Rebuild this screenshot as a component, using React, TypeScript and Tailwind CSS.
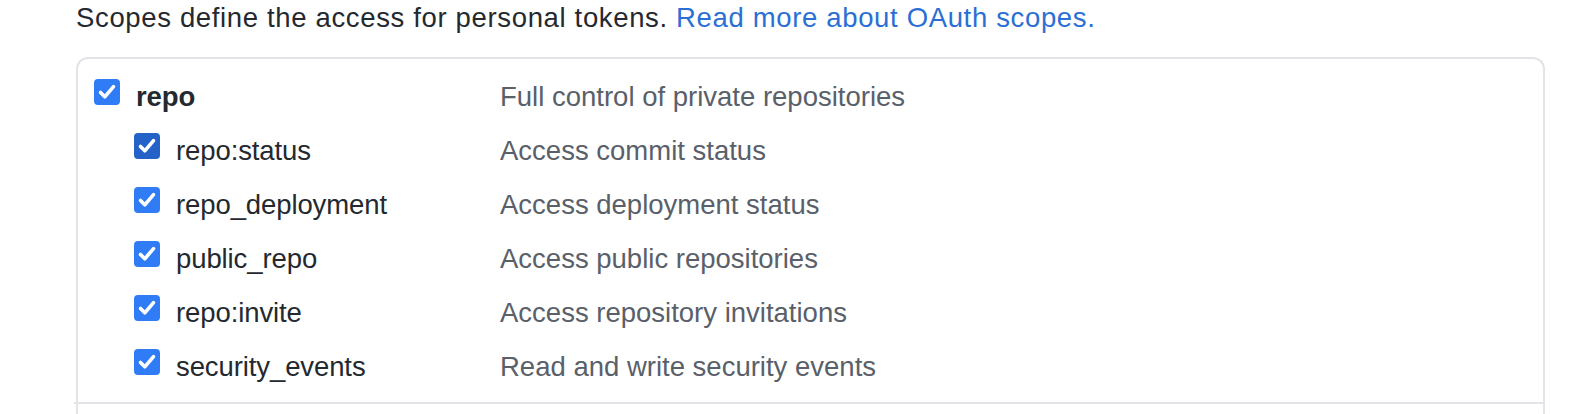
const scopes = [
  { name: "repo", desc: "Full control of private repositories", parent: true },
  { name: "repo:status", desc: "Access commit status", focused: true },
  { name: "repo_deployment", desc: "Access deployment status" },
  { name: "public_repo", desc: "Access public repositories" },
  { name: "repo:invite", desc: "Access repository invitations" },
  { name: "security_events", desc: "Read and write security events" },
];

function Check({ dark }: { dark?: boolean }) {
  return (
    <span
      className={`mt-[14px] flex h-[26px] w-[26px] shrink-0 items-center justify-center rounded-[4px] ${
        dark ? "bg-[#2462c8]" : "bg-[#2f7cf6]"
      }`}
    >
      <svg width="26" height="26" viewBox="0 0 26 26" fill="none">
        <path
          d="M6.5 13.5 L10.8 17.8 L19.5 7.6"
          stroke="white"
          strokeWidth="3.6"
          strokeLinecap="round"
          strokeLinejoin="round"
        />
      </svg>
    </span>
  );
}

export default function App() {
  return (
    <div className="h-[414px] w-full overflow-hidden bg-white font-['Liberation_Sans',Arial,sans-serif] text-[27.5px]">
      <p className="pl-[76px] leading-[36px] tracking-[0.65px] text-[#24292f]">
        Scopes define the access for personal tokens.{" "}
        <a href="#" className="text-[#2b6fd5]">
          Read more about OAuth scopes.
        </a>
      </p>

      <div className="ml-[76px] mt-[21px] w-[1469px] rounded-t-[12px] border-x-2 border-t-2 border-[#e2e4e8]">
        <div className="pl-[16px] pt-[6px] pb-[13px]">
          {scopes.map((s) => (
            <div key={s.name} className="flex h-[54px] items-start">
              <div className={`flex w-[406px] shrink-0 items-start gap-[16px] ${s.parent ? "" : "pl-[40px]"}`}>
                <Check dark={s.focused} />
                <span
                  className={`pt-[9px] leading-[45px] tracking-[-0.1px] text-[#24292f] ${s.parent ? "font-bold" : ""}`}
                >
                  {s.name}
                </span>
              </div>
              <span className="pt-[9px] leading-[45px] text-[#59606a]">{s.desc}</span>
            </div>
          ))}
        </div>
        <div className="-ml-[4px] h-[20px] border-t-2 border-[#e2e4e8]" />
      </div>
    </div>
  );
}
